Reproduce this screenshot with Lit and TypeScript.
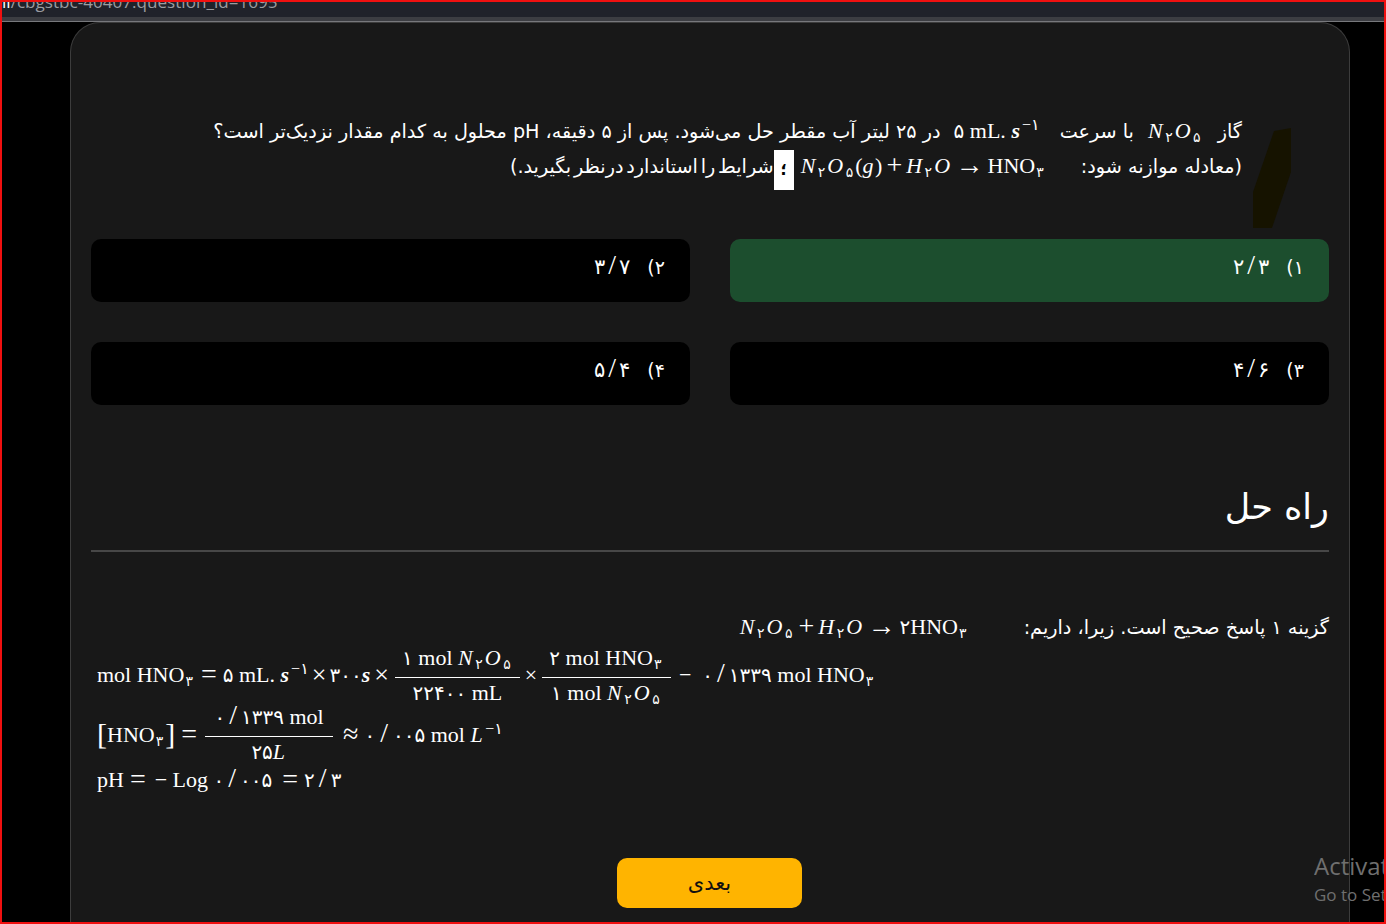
import { LitElement, html, css } from "lit";
import { customElement } from "lit/decorators.js";

const sub = (t: string) => html`<sub class="sb">${t}</sub>`;
const sup = (t: string) => html`<sup class="sp">${t}</sup>`;
const op = (t: string) => html`<span class="op">${t}</span>`;
const d = (t: string) => html`<span class="d">${t}</span>`;
const sl = html`<span class="sl">/</span>`;
const n2o5 = html`<i>N</i>${sub("۲")}<i>O</i>${sub("۵")}`;
const h2o = html`<i>H</i>${sub("۲")}<i>O</i>`;
const hno3 = html`HNO${sub("۳")}`;
const mlS = html`${d("۵")} mL. <b class="s">s</b>${sup("−۱")}`;

@customElement("app-root")
export class AppRoot extends LitElement {
  static styles = css`
    :host { display: block; width: 1386px; height: 924px; box-sizing: border-box; overflow: hidden; position: relative;
      border: 2px solid #f01010; background: #000; color: #fff;
      font-family: "DejaVu Sans", "Noto Sans", sans-serif; }
    .url { height: 15px; background: #20222a; overflow: hidden; color: #9a9ca0; font: 17.1px/1 "Open Sans", sans-serif; white-space: nowrap; }
    .url span { display: block; margin-top: -9px; }
    .url b { color: #fff; font-weight: 400; }
    .strip { height: 4px; background: #3c3d42; border-bottom: 1px solid #77787c; }
    .card { box-sizing: border-box; width: 1280px; height: 920px; margin-left: 68px; background: #181818;
      border: 1px solid #3c3c3c; border-bottom: 0; border-radius: 30px 30px 0 0; padding: 91px 20px 0; }
    .q { direction: rtl; padding: 0 87px 0 0; font-size: 19.2px; line-height: 35px; height: 72px; white-space: nowrap; }
    .tight { word-spacing: -3.3px; }
    .m { font-family: "Liberation Serif", "DejaVu Sans", serif; font-size: 22px; direction: ltr; unicode-bidi: isolate; display: inline-block; line-height: 1; white-space: nowrap; }
    .m i { margin-right: 1.5px; }
    .s { font-style: italic; font-weight: 700; margin-right: 1px; }
    .sb { font-size: 14px; line-height: 0; vertical-align: -4px; margin: 0 2px 0 1px; }
    .sp { font-size: 16px; line-height: 0; vertical-align: 8px; margin-left: 1px; }
    .op { font-size: 28px; line-height: 0; margin: 0 6px; vertical-align: -1px; }
    .op.t { font-size: 26px; margin: 0 3px; }
    .g3 .op, .s1 .op { margin: 0 4px; }
    .d { font-size: 20px; letter-spacing: 2px; }
    .sl { font-size: 28px; line-height: 0; margin: 0 4px; font-weight: 400; }
    .br { font-size: 30px; line-height: 0; font-weight: 400; vertical-align: -2px; }
    .g1 { margin: 0 9px 0 8px; }
    .g2 { margin: 0 14px 0 7px; }
    .g3 { margin: 0 29px 0 7px; }
    .box { display: inline-block; width: 20px; height: 40px; background: #fff; color: #000; line-height: 40px; text-align: center; vertical-align: -2px; font-size: 16px; font-weight: 700; }
    .opts { display: grid; grid-template-columns: 599px 599px; gap: 40px; margin-top: 53px; direction: rtl; }
    .opt { height: 63px; border-radius: 10px; background: #000; padding: 13px 25px 0; box-sizing: border-box; font-size: 19px; line-height: 30px; }
    .opt.ok { background: #1c4e2e; }
    .val { display: inline-block; direction: ltr; unicode-bidi: isolate; margin-right: 17px; font-size: 21px; }
    .val .sl { margin: 0 3px; font-family: "Liberation Serif", serif; }
    h2 { margin: 78px 0 0; direction: rtl; font-size: 35px; font-weight: 400; line-height: 48px; height: 67px; border-bottom: 2px solid #474747; }
    .sol { margin-top: 58px; }
    .s1 { direction: rtl; font-size: 19.2px; line-height: 36px; height: 36px; white-space: nowrap; }
    .s1 .m { margin-right: 49px; }
    .row { display: flex; align-items: center; padding-left: 6px; direction: ltr; }
    .r1 { height: 66px; margin-top: -4px; }
    .r2 { height: 53px; margin-top: 0; }
    .r3 { height: 37px; margin-top: 0; }
    .frac { display: inline-flex; flex-direction: column; align-items: center; }
    .frac > span { padding: 0 0 8px; white-space: nowrap; }
    .frac > span + span { border-top: 1px solid #fff; padding: 4px 0 0; align-self: stretch; text-align: center; }
    .f1 { width: 125px; margin-left: 3px; }
    .f2 { width: 129px; }
    .f3 { width: 128px; margin-left: 2px; }
    .x { width: 22px; text-align: center; }
    .rest { margin-left: 8px; }
    .tail { margin-left: 4px; }
    .tail .sl { margin: 0 5px; }
    .lg { margin-left: 3px; }
    .w4 { margin-right: 4px; }
    .next { display: block; margin: 60px 0 0 526px; width: 185px; height: 50px; border: 0; border-radius: 10px; background: #ffb400; color: #111; font: 21px "DejaVu Sans", sans-serif; }
    .blob { position: absolute; left: 1248px; top: 123px; }
    .act { position: absolute; left: 1312px; top: 848px; width: 70px; overflow: hidden; white-space: nowrap; color: #6f6f6f; font-family: "Open Sans", sans-serif; font-size: 24px; line-height: 32px; }
    .act small { display: block; font-size: 17px; line-height: 26px; }
  `;

  render() {
    return html`
      <div class="url"><span><b>ıı</b>/cbgstbc-40407.question_id=1695</span></div>
      <div class="strip"></div>
      <div class="card">
        <div class="q">
          گاز <span class="m g1">${n2o5}</span> با سرعت
          <span class="m g2">${mlS}</span>
          در ۲۵ لیتر آب مقطر حل می‌شود. پس از ۵ دقیقه، pH محلول به کدام مقدار نزدیک‌تر است؟<br />
          (معادله موازنه شود:
          <span class="m g3">${n2o5}(<i>g</i>)${op("+")}${h2o}${op("→")}${hno3}</span><span class="box">؛</span><span class="tight">شرایط را استاندارد درنظر بگیرید.)</span>
        </div>
        <div class="opts">
          <div class="opt ok">۱)<span class="val">۲${sl}۳</span></div>
          <div class="opt">۲)<span class="val">۳${sl}۷</span></div>
          <div class="opt">۳)<span class="val">۴${sl}۶</span></div>
          <div class="opt">۴)<span class="val">۵${sl}۴</span></div>
        </div>
        <h2>راه حل</h2>
        <div class="sol">
          <div class="s1">گزینه ۱ پاسخ صحیح است. زیرا، داریم: <span class="m">${n2o5}${op("+")}${h2o}${op("→")}${d("۲")}${hno3}</span></div>
          <div class="row r1"><span class="m">mol ${hno3}${op("=")}${mlS}<span class="op t">×</span>${d("۳۰۰")}<b class="s">s</b><span class="op t">×</span></span>
            <span class="m frac f1"><span>${d("۱")} mol ${n2o5}</span><span>${d("۲۲۴۰۰")} mL</span></span>
            <span class="m x">×</span>
            <span class="m frac f2"><span>${d("۲")} mol ${hno3}</span><span>${d("۱")} mol ${n2o5}</span></span>
            <span class="m rest">−&nbsp;&nbsp;${d("۰")}${sl}${d("۱۳۳۹")} mol ${hno3}</span></div>
          <div class="row r2"><span class="m"><span class="br">[</span>${hno3}<span class="br">]</span>${op("=")}</span>
            <span class="m frac f3"><span>${d("۰")}${sl}${d("۱۳۳۹")} mol</span><span>${d("۲۵")}<i>L</i></span></span>
            <span class="m tail">${op("≈")}${d("۰")}${sl}${d("۰۰۵")} mol <i>L</i>${sup("−۱")}</span></div>
          <div class="row r3"><span class="m">pH${op("=")}<span class="lg">− Log</span> ${d("۰")}${sl}<span class="w4">${d("۰۰۵")}</span>${op("=")}${d("۲")}${sl}${d("۳")}</span></div>
        </div>
        <button class="next">بعدی</button>
      </div>
      <svg class="blob" width="44" height="106" viewBox="0 0 44 106"><polygon points="24,6 41,3 41,47 22,103 3,103 3,67" fill="#161300"/></svg>
      <div class="act">Activate<small>Go to Settings</small></div>
    `;
  }
}
